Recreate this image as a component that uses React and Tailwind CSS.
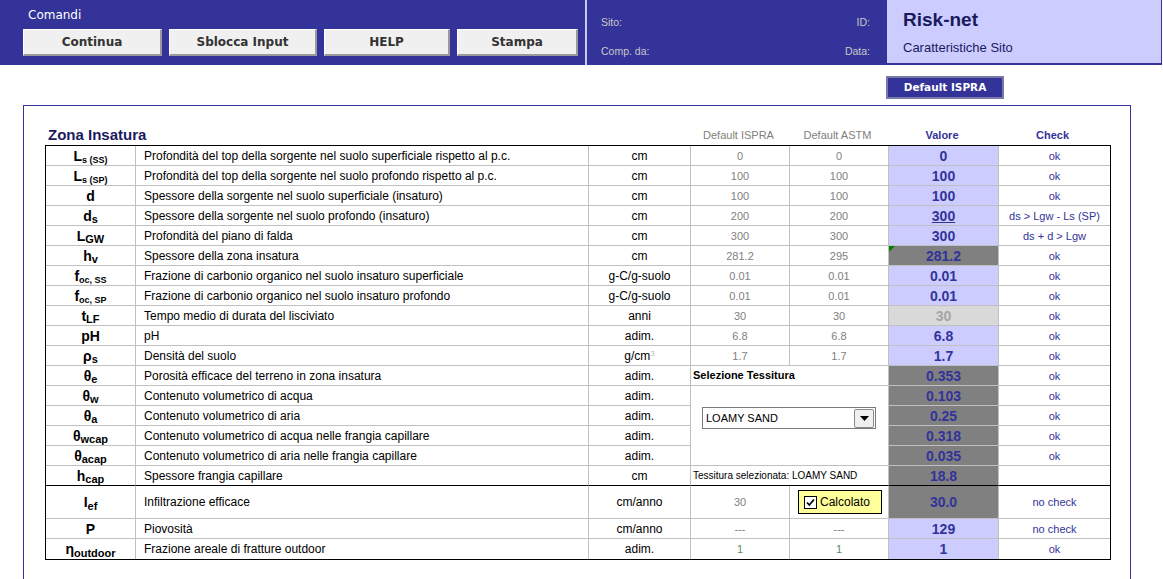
import React from 'react';

const Sym = ({ b, s, size = 'text-[9px]' }) => (
  <span className="font-bold text-[14px] leading-none text-black">
    {b}
    {s && <sub className={`${size} font-bold`}>{s}</sub>}
  </span>
);

const rows = [
  { sym: <Sym b="L" s="s (SS)" />, desc: 'Profondità del top della sorgente nel suolo superficiale rispetto al p.c.', unit: 'cm', isp: '0', astm: '0', val: '0', kind: 'in', check: 'ok' },
  { sym: <Sym b="L" s="s (SP)" />, desc: 'Profondità del top della sorgente nel suolo profondo rispetto al p.c.', unit: 'cm', isp: '100', astm: '100', val: '100', kind: 'in', check: 'ok' },
  { sym: <Sym b="d" />, desc: 'Spessore della sorgente nel suolo superficiale (insaturo)', unit: 'cm', isp: '100', astm: '100', val: '100', kind: 'in', check: 'ok' },
  { sym: <Sym b="d" s="s" size="text-[11px]" />, desc: 'Spessore della sorgente nel suolo profondo (insaturo)', unit: 'cm', isp: '200', astm: '200', val: '300', kind: 'in', check: 'ds > Lgw - Ls (SP)', underline: true },
  { sym: <Sym b="L" s="GW" size="text-[11px]" />, desc: 'Profondità del piano di falda', unit: 'cm', isp: '300', astm: '300', val: '300', kind: 'in', check: 'ds + d > Lgw' },
  { sym: <Sym b="h" s="v" size="text-[11px]" />, desc: 'Spessore della zona insatura', unit: 'cm', isp: '281.2', astm: '295', val: '281.2', kind: 'calc', check: 'ok', flag: true },
  { sym: <Sym b="f" s="oc, SS" />, desc: 'Frazione di carbonio organico nel suolo insaturo superficiale', unit: 'g-C/g-suolo', isp: '0.01', astm: '0.01', val: '0.01', kind: 'in', check: 'ok' },
  { sym: <Sym b="f" s="oc, SP" />, desc: 'Frazione di carbonio organico nel suolo insaturo profondo', unit: 'g-C/g-suolo', isp: '0.01', astm: '0.01', val: '0.01', kind: 'in', check: 'ok' },
  { sym: <Sym b="t" s="LF" size="text-[11px]" />, desc: 'Tempo medio di durata del lisciviato', unit: 'anni', isp: '30', astm: '30', val: '30', kind: 'lock', check: 'ok' },
  { sym: <Sym b="pH" />, desc: 'pH', unit: 'adim.', isp: '6.8', astm: '6.8', val: '6.8', kind: 'in', check: 'ok' },
  { sym: <Sym b="ρ" s="s" size="text-[11px]" />, desc: 'Densità del suolo', unit: 'g/cm', sup: true, isp: '1.7', astm: '1.7', val: '1.7', kind: 'in', check: 'ok' },
  { sym: <Sym b="θ" s="e" size="text-[11px]" />, desc: 'Porosità efficace del terreno in zona insatura', unit: 'adim.', special: 'sel', val: '0.353', kind: 'calc', check: 'ok' },
  { sym: <Sym b="θ" s="w" size="text-[11px]" />, desc: 'Contenuto volumetrico di acqua', unit: 'adim.', special: 'drop', val: '0.103', kind: 'calc', check: 'ok' },
  { sym: <Sym b="θ" s="a" size="text-[11px]" />, desc: 'Contenuto volumetrico di aria', unit: 'adim.', special: 'skip', val: '0.25', kind: 'calc', check: 'ok' },
  { sym: <Sym b="θ" s="wcap" size="text-[11px]" />, desc: 'Contenuto volumetrico di acqua nelle frangia capillare', unit: 'adim.', special: 'skip', val: '0.318', kind: 'calc', check: 'ok' },
  { sym: <Sym b="θ" s="acap" size="text-[11px]" />, desc: 'Contenuto volumetrico di aria nelle frangia capillare', unit: 'adim.', special: 'skip', val: '0.035', kind: 'calc', check: 'ok' },
  { sym: <Sym b="h" s="cap" size="text-[11px]" />, desc: 'Spessore frangia capillare', unit: 'cm', special: 'tex', val: '18.8', kind: 'calc', check: '', blackB: true },
  { sym: <Sym b="I" s="ef" size="text-[11px]" />, desc: 'Infiltrazione efficace', unit: 'cm/anno', isp: '30', special: 'calcbox', val: '30.0', kind: 'calc', check: 'no check', tall: true },
  { sym: <Sym b="P" />, desc: 'Piovosità', unit: 'cm/anno', isp: '---', astm: '---', val: '129', kind: 'in', check: 'no check' },
  { sym: <Sym b="η" s="outdoor" size="text-[11px]" />, desc: 'Frazione areale di fratture outdoor', unit: 'adim.', isp: '1', astm: '1', val: '1', kind: 'in', check: 'ok', green: true, last: true },
];

const valBg = {
  in: 'bg-[#ccccff] text-[#333399]',
  calc: 'bg-[#808080] text-[#333399]',
  lock: 'bg-[#d9d9d9] text-[#a6a6a6]',
};

const Dropdown = () => (
  <div className="flex items-center w-[174px] h-[22px] border border-[#7a7a7a] bg-white">
    <span className="flex-1 pl-[3px] text-[11px] text-black">LOAMY SAND</span>
    <div className="w-[20px] h-[19px] mr-[1px] flex items-center justify-center bg-[#f0f0f0] border border-[#8a8a8a] rounded-[2px]">
      <svg width="9" height="5" viewBox="0 0 9 5"><path d="M0 0h9L4.5 5z" fill="#000" /></svg>
    </div>
  </div>
);

const CalcBox = () => (
  <div className="ml-[8px] flex items-center w-[84px] h-[24px] border border-black bg-[#ffff99]">
    <div className="ml-[5px] w-[13px] h-[13px] border border-black bg-white flex items-center justify-center">
      <svg width="9" height="9" viewBox="0 0 9 9"><path d="M1 4.5l2.3 2.5L8 1.5" fill="none" stroke="#000" strokeWidth="1.8" /></svg>
    </div>
    <span className="ml-[3px] text-[12px] text-black">Calcolato</span>
  </div>
);

const Btn = ({ children, w }) => (
  <button className={`${w} h-[27px] bg-[#f0f0f0] border-t border-l border-t-white border-l-white border-r-2 border-b-2 border-r-[#9a9a9a] border-b-[#9a9a9a] text-[12px] font-bold text-[#333] font-['DejaVu_Sans',sans-serif]`}>
    {children}
  </button>
);

export default function App() {
  const cell = (lastCol, r) =>
    `p-0 border-r border-b ${lastCol ? 'border-r-0' : 'border-r-[#c0c0c0]'} ${r.last ? 'border-b-0' : r.blackB ? 'border-b-black' : 'border-b-[#c0c0c0]'}`;

  return (
    <div className="w-[1163px] h-[579px] overflow-hidden bg-white font-['Liberation_Sans',Arial,sans-serif]">
      {/* header */}
      <div className="flex w-[1162px] h-[65px] bg-[#333399]">
        <div className="w-[585px] pl-[23px] pt-[7px]">
          <div className="pl-[5px] text-[12px] text-white leading-[16px] font-['DejaVu_Sans',sans-serif]">Comandi</div>
          <div className="flex gap-[7px] mt-[6px]">
            <Btn w="w-[139px]">Continua</Btn>
            <Btn w="w-[148px]">Sblocca Input</Btn>
            <Btn w="w-[126px]">HELP</Btn>
            <Btn w="w-[121px]">Stampa</Btn>
          </div>
        </div>
        <div className="w-[2px] bg-[#c8c8f0]" />
        <div className="w-[300px] flex flex-col pl-[14px] pr-[17px] pt-[15px] text-[10.5px] text-[#c8c8c8]">
          <div className="flex justify-between h-[29px]"><span>Sito:</span><span>ID:</span></div>
          <div className="flex justify-between"><span>Comp. da:</span><span>Data:</span></div>
        </div>
        <div className="flex-1 mr-[1px] mb-[2px] bg-[#ccccff] pl-[16px] pt-[9px] text-[#1a1a5e]">
          <div className="text-[19px] font-bold leading-[22px]">Risk-net</div>
          <div className="text-[13px] mt-[9px] leading-[16px]">Caratteristiche Sito</div>
        </div>
      </div>

      {/* default button */}
      <div className="flex pl-[886px] pt-[11px]">
        <button className="w-[118px] h-[23px] bg-[#333399] border-2 border-[#7a7aa8] text-white text-[10.5px] font-bold font-['DejaVu_Sans',sans-serif]">
          Default ISPRA
        </button>
      </div>

      {/* panel */}
      <div className="mt-[6px] ml-[23px] w-[1108px] h-[520px] border border-[#333399] pl-[21px]">
        <div className="flex items-end h-[39px] pb-[1px] w-[1066px]">
          <div className="w-[644px] pl-[3px] text-[15px] font-bold text-[#1a1a5e] leading-[18px]">Zona Insatura</div>
          <div className="w-[99px] text-center text-[11px] text-[#808080] leading-[16px] pb-[1px]">Default ISPRA</div>
          <div className="w-[99px] text-center text-[11px] text-[#808080] leading-[16px] pb-[1px]">Default ASTM</div>
          <div className="w-[110px] text-center text-[11px] font-bold text-[#333399] leading-[16px] pb-[1px]">Valore</div>
          <div className="w-[111px] text-center text-[11px] font-bold text-[#333399] leading-[16px] pb-[1px]">Check</div>
        </div>
        <div className="w-[1066px] border border-black">
          <table className="table-fixed border-separate border-spacing-0 w-[1064px] text-[12px] leading-[14px]">
            <colgroup>
              <col className="w-[90px]" />
              <col className="w-[453px]" />
              <col className="w-[102px]" />
              <col className="w-[99px]" />
              <col className="w-[99px]" />
              <col className="w-[110px]" />
              <col className="w-[111px]" />
            </colgroup>
            <tbody>
              {rows.map((r, i) => (
                <tr key={i} className={r.tall ? 'h-[33px]' : 'h-[20px]'}>
                  <td className={`${cell(false, r)} text-center leading-none`}>{r.sym}</td>
                  <td className={`${cell(false, r)} pl-[8px] text-[12px] text-black whitespace-nowrap`}>{r.desc}</td>
                  <td className={`${cell(false, r)} text-center text-[12px] text-black`}>
                    {r.unit}
                    {r.sup && <sup className="text-[8px] text-[#bbbbbb]">3</sup>}
                  </td>
                  {r.special === 'sel' && (
                    <td colSpan={2} className={`${cell(false, r)} align-top pl-[2px] pt-[2px] text-[11px] font-bold text-black`}>
                      Selezione Tessitura
                    </td>
                  )}
                  {r.special === 'drop' && (
                    <td colSpan={2} rowSpan={4} className={`${cell(false, r)} align-top pl-[11px] pt-[21px]`}>
                      <Dropdown />
                    </td>
                  )}
                  {r.special === 'tex' && (
                    <td colSpan={2} className={`${cell(false, r)} pl-[2px] text-[10px] text-black whitespace-nowrap`}>
                      Tessitura selezionata: LOAMY SAND
                    </td>
                  )}
                  {r.special === 'calcbox' && (
                    <>
                      <td className={`${cell(false, r)} text-center text-[11px] text-[#808080]`}>{r.isp}</td>
                      <td className={`${cell(false, r)}`}><CalcBox /></td>
                    </>
                  )}
                  {!r.special && (
                    <>
                      <td className={`${cell(false, r)} text-center text-[11px] ${r.green ? 'text-[#5c8a5c]' : 'text-[#808080]'}`}>{r.isp}</td>
                      <td className={`${cell(false, r)} text-center text-[11px] ${r.green ? 'text-[#5c8a5c]' : 'text-[#808080]'}`}>{r.astm}</td>
                    </>
                  )}
                  <td className={`${cell(false, r)} ${valBg[r.kind]} relative text-center text-[14px] font-bold`}>
                    {r.flag && (
                      <svg className="absolute left-0 top-0" width="6" height="6" viewBox="0 0 6 6"><path d="M0 0h6L0 6z" fill="#008000" /></svg>
                    )}
                    <span className={r.underline ? 'underline' : ''}>{r.val}</span>
                  </td>
                  <td className={`${cell(true, r)} text-center text-[11px] text-[#333399] whitespace-nowrap`}>{r.check}</td>
                </tr>
              ))}
            </tbody>
          </table>
        </div>
      </div>
    </div>
  );
}
